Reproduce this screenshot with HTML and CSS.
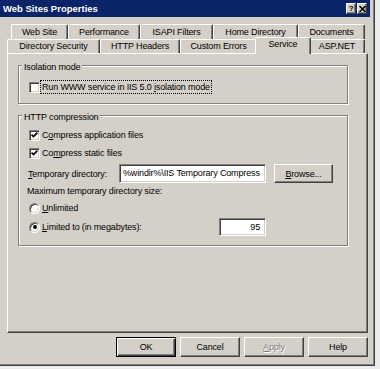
FILE: index.html
```html
<!DOCTYPE html>
<html>
<head>
<meta charset="utf-8">
<title>Web Sites Properties</title>
<link rel="stylesheet" href="styles.css">
</head>
<body>
<div class="window">
  <div class="titlebar">
    <span class="title">Web Sites Properties</span>
    <span class="capbtns">
      <span class="capbtn">?</span>
      <span class="capbtn"><svg width="7" height="6" viewBox="0 0 7 6"><path d="M0.5 0 L6.5 6 M6.5 0 L0.5 6" stroke="#000" stroke-width="1.5"/></svg></span>
    </span>
  </div>
  <div class="tabs">
    <div class="tabrow back">
      <span class="tab t-website">Web Site</span>
      <span class="tab t-perf">Performance</span>
      <span class="tab t-isapi">ISAPI Filters</span>
      <span class="tab t-home">Home Directory</span>
      <span class="tab t-docs">Documents</span>
    </div>
    <div class="tabrow front">
      <span class="tab t-dirsec">Directory Security</span>
      <span class="tab t-http">HTTP Headers</span>
      <span class="tab t-custom">Custom Errors</span>
      <span class="tab t-service sel">Service</span>
      <span class="tab t-aspnet">ASP.NET</span>
    </div>
  </div>
  <div class="panel">
    <div class="group iso">
      <span class="gtitle">Isolation mode</span>
      <div class="row iso-row">
        <span class="cb"></span>
        <span class="lbl focus">Run WWW service in IIS 5.0 <u>i</u>solation mode</span>
      </div>
    </div>
    <div class="group http">
      <span class="gtitle">HTTP compression</span>
      <div class="row r1">
        <span class="cb"><svg width="9" height="9" viewBox="0 0 9 9"><polyline points="1.6,3.7 3.5,5.6 7.4,1.7" fill="none" stroke="#000" stroke-width="1.7"/></svg></span>
        <span class="lbl">C<u>o</u>mpress application files</span>
      </div>
      <div class="row r2">
        <span class="cb"><svg width="9" height="9" viewBox="0 0 9 9"><polyline points="1.6,3.7 3.5,5.6 7.4,1.7" fill="none" stroke="#000" stroke-width="1.7"/></svg></span>
        <span class="lbl">Co<u>m</u>press static files</span>
      </div>
      <div class="row r3">
        <span class="dirlbl"><u>T</u>emporary directory:</span>
        <span class="edit dir">%windir%\IIS Temporary Compress</span>
        <span class="btn browse"><span><u>B</u>rowse...</span></span>
      </div>
      <div class="row r4">Maximum temporary directory size:</div>
      <div class="row r5">
        <span class="rb"></span>
        <span class="lbl"><u>U</u>nlimited</span>
      </div>
      <div class="row r6">
        <span class="rb on"></span>
        <span class="lbl lim"><u>L</u>imited to (in megabytes):</span>
        <span class="edit num">95</span>
      </div>
    </div>
  </div>
  <div class="buttons">
    <span class="btn default">OK</span>
    <span class="btn">Cancel</span>
    <span class="btn disabled"><u>A</u>pply</span>
    <span class="btn">Help</span>
  </div>
</div>
</body>
</html>
```
FILE: styles.css
```css
* { box-sizing: border-box; }
html, body { margin: 0; padding: 0; }
body {
  width: 380px;
  height: 369px;
  overflow: hidden;
  background: #ececec;
  font-family: "Liberation Sans", Arial, sans-serif;
  font-size: 9px;
  letter-spacing: -0.15px;
  color: #000;
}
u { text-decoration-thickness: 1px; text-underline-offset: 1px; }

.window {
  width: 375px;
  height: 366px;
  background: #d4d0c8;
  border-right: 1px solid #404040;
  border-bottom: 1px solid #404040;
  box-shadow: inset -1px -1px 0 #808080;
  display: flex;
  flex-direction: column;
}

/* title bar */
.titlebar {
  height: 17px;
  margin-right: 4px;
  background: #0a246a;
  display: flex;
  align-items: center;
  justify-content: space-between;
  padding: 0 3px 0 3px;
}
.title { color: #fff; font-weight: bold; font-size: 9.5px; letter-spacing: 0; }
.capbtns { display: flex; gap: 1px; }
.capbtn {
  width: 10px;
  height: 11px;
  background: #d4d0c8;
  border-top: 1px solid #fff;
  border-left: 1px solid #fff;
  border-right: 1px solid #404040;
  border-bottom: 1px solid #404040;
  box-shadow: inset -1px -1px 0 #808080;
  display: flex;
  align-items: center;
  justify-content: center;
  font-weight: bold;
  font-size: 8px;
  line-height: 1;
}

/* tabs */
.tabs { margin-top: 7px; display: flex; flex-direction: column; }
.tabrow { display: flex; }
.tabrow.back { padding-left: 11px; height: 15px; }
.tabrow.front { padding-left: 7px; height: 14px; }
.tab {
  background: #d4d0c8;
  border-top: 1px solid #fff;
  border-left: 1px solid #fff;
  border-right: 1px solid #404040;
  box-shadow: inset -1px 0 0 #808080;
  border-radius: 2px 2px 0 0;
  text-align: center;
  white-space: nowrap;
  line-height: 13px;
}
.back .tab { height: 15px; padding-top: 1px; }
.front .tab { height: 14px; }
.tab.sel {
  margin: -2px -2px 0 -2px;
  height: 17px;
  position: relative;
  z-index: 1;
}
.t-website { width: 57px; }
.t-perf { width: 72px; }
.t-isapi { width: 73px; }
.t-home { width: 85px; }
.t-docs { width: 67px; }
.t-dirsec { width: 93px; }
.t-http { width: 80px; }
.t-custom { width: 77px; }
.t-service { width: 56px; }
.t-aspnet { width: 56px; }

/* panel */
.panel {
  margin-left: 7px;
  width: 361px;
  height: 280px;
  border-top: 1px solid #fff;
  border-left: 1px solid #fff;
  border-right: 1px solid #404040;
  border-bottom: 1px solid #404040;
  box-shadow: inset -1px -1px 0 #808080;
  padding: 11px 0 0 10px;
  display: flex;
  flex-direction: column;
}

.group {
  width: 330px;
  border: 1px solid #808080;
  box-shadow: 1px 1px 0 #fff, inset 1px 1px 0 #fff;
  padding-left: 9px;
  display: flex;
  flex-direction: column;
}
.group.iso { height: 39px; }
.group.http { height: 131px; margin-top: 11px; }
.gtitle {
  align-self: flex-start;
  margin: -5px 0 0 -6px;
  padding: 0 2px;
  height: 12px;
  line-height: 12px;
  background: #d4d0c8;
}

.row { display: flex; align-items: center; white-space: nowrap; }
.iso-row { margin-top: 7px; height: 14px; }
.r1 { margin-top: 6px; height: 12px; }
.r2 { margin-top: 6px; height: 12px; }
.r3 { margin-top: 5px; height: 19px; }
.r4 { margin-top: 1px; height: 13px; margin-left: -1px; }
.r5 { margin-top: 5px; height: 12px; }
.r6 { margin-top: 4px; height: 18px; }

.cb, .rb {
  flex: none;
  width: 11px;
  height: 11px;
  margin-left: 1px;
  background: #fff;
  border: 1px solid;
  border-color: #808080 #fff #fff #808080;
  box-shadow: inset 1px 1px 0 #404040, inset -1px -1px 0 #d4d0c8;
  display: flex;
}
.cb svg { display: block; }
.rb { border-radius: 50%; align-items: center; justify-content: center; }
.rb.on::after {
  content: "";
  width: 4px;
  height: 4px;
  border-radius: 50%;
  background: #000;
}
.lbl { margin-left: 1px; padding: 0 1px; line-height: 12px; }
.lbl.focus { margin-left: 0; border: 1px dotted #000; }
.lbl.lim { width: 177px; margin-left: 2px; padding: 0; }

.dirlbl { width: 91px; flex: none; }
.edit {
  flex: none;
  background: #fff;
  border: 1px solid;
  border-color: #808080 #fff #fff #808080;
  box-shadow: inset 1px 1px 0 #404040, inset -1px -1px 0 #d4d0c8;
  white-space: nowrap;
  overflow: hidden;
}
.edit.dir { width: 147px; height: 19px; padding: 0 3px; line-height: 17px; }
.edit.num { width: 47px; height: 18px; text-align: right; padding: 0 5px 0 3px; line-height: 16px; }

.btn {
  flex: none;
  width: 60px;
  height: 20px;
  background: #d4d0c8;
  border: 1px solid;
  border-color: #fff #404040 #404040 #fff;
  box-shadow: inset -1px -1px 0 #808080;
  display: flex;
  align-items: center;
  justify-content: center;
}
.btn.browse { width: 59px; height: 19px; margin-left: 8px; }
.btn.default {
  border-color: #000;
  box-shadow: inset 1px 1px 0 #fff, inset -1px -1px 0 #404040, inset -2px -2px 0 #808080;
}
.btn.disabled { color: #808080; text-shadow: 1px 1px 0 #fff; }

.buttons {
  display: flex;
  justify-content: flex-end;
  gap: 4px;
  margin-top: 4px;
  padding-right: 6px;
}
```
